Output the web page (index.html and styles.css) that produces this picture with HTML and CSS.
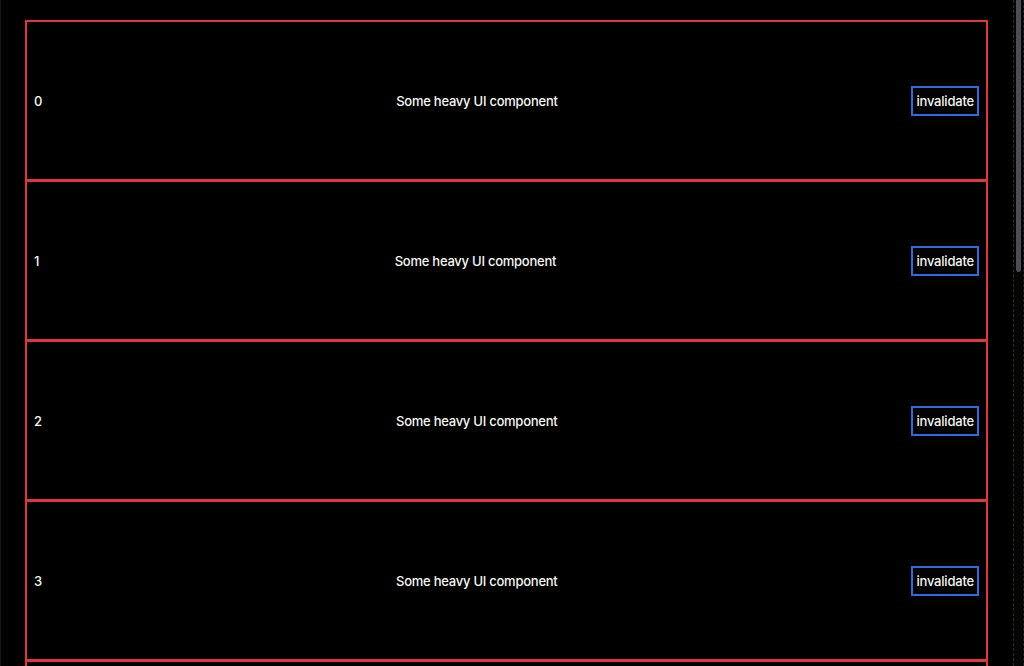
FILE: index.html
```html
<!DOCTYPE html>
<html lang="en">
<head>
<meta charset="utf-8">
<title>Heavy list</title>
<link rel="stylesheet" href="styles.css">
</head>
<body>
<div class="frame">
  <div class="viewport">
    <div class="list">
      <div class="row"><span class="idx">0</span><span class="label">Some heavy UI component</span><button class="btn">invalidate</button></div>
      <div class="row"><span class="idx">1</span><span class="label">Some heavy UI component</span><button class="btn">invalidate</button></div>
      <div class="row"><span class="idx">2</span><span class="label">Some heavy UI component</span><button class="btn">invalidate</button></div>
      <div class="row"><span class="idx">3</span><span class="label">Some heavy UI component</span><button class="btn">invalidate</button></div>
      <div class="row row-partial"></div>
    </div>
  </div>
  <div class="rail"><div class="thumb"></div></div>
</div>
</body>
</html>
```
FILE: styles.css
```css
html, body {
  margin: 0;
  height: 100%;
  overflow: hidden;
  background: #000;
}
body {
  color: #f6f6f0;
  font-family: Inter, "Noto Sans", "Liberation Sans", sans-serif;
  font-size: 13px;
}
.frame {
  display: flex;
  height: 100vh;
  border-left: 1px solid #18180a;
  box-sizing: border-box;
}
.viewport {
  flex: 1;
  overflow: hidden;
}
.rail {
  width: 11px;
  flex: none;
  background: #050505;
  border-left: 1px dashed #2e2e18;
  border-right: 1px dashed #202012;
  box-sizing: border-box;
  padding: 0 2px 0 2px;
}
.thumb {
  height: 272px;
  background: #4d4c59;
  border-radius: 0 0 4px 4px;
}
.list {
  display: flex;
  flex-direction: column;
  padding: 20px 25px 0 24px;
}
.row {
  box-sizing: border-box;
  height: 161px;
  margin-top: -1px;
  border: 2px solid #e2363c;
  display: flex;
  align-items: center;
  justify-content: space-between;
  padding: 0 7px;
  flex: none;
}
.row:first-child {
  margin-top: 0;
}
.label {
  font-weight: 500;
  letter-spacing: -0.25px;
}
.idx {
  font-weight: 500;
}
.btn {
  background: #000;
  color: #f6f6f0;
  font-family: inherit;
  font-size: 13px;
  font-weight: 500;
  letter-spacing: -0.2px;
  border: 2px solid #2f6be0;
  border-radius: 0;
  padding: 5px 3px;
  line-height: 16px;
}
```
